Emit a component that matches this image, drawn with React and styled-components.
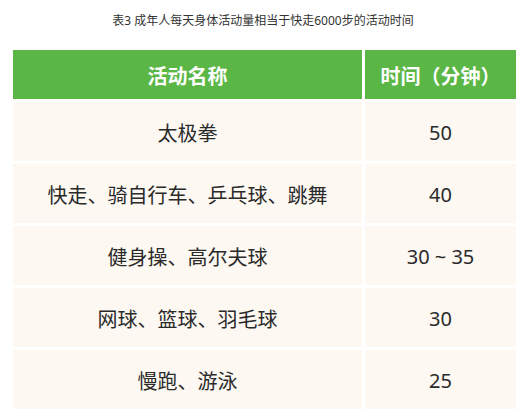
import React from 'react';
import styled, { createGlobalStyle } from 'styled-components';

const GlobalStyle = createGlobalStyle`
    body {
        margin: 0;
        background: #ffffff;
        font-family: "Noto Sans", "Noto Sans CJK SC", sans-serif;
    }
`;

const rows = [
    { name: '太极拳', time: '50' },
    { name: '快走、骑自行车、乒乓球、跳舞', time: '40' },
    { name: '健身操、高尔夫球', time: '30 ~ 35' },
    { name: '网球、篮球、羽毛球', time: '30' },
    { name: '慢跑、游泳', time: '25' },
];

const App = () => {
    return (
        <Page>
            <GlobalStyle />
            <Caption>表3 成年人每天身体活动量相当于快走6000步的活动时间</Caption>
            <Table>
                <HeadCell>活动名称</HeadCell>
                <HeadCell>时间（分钟）</HeadCell>
                {rows.map((r, idx) => (
                    <React.Fragment key={idx}>
                        <Cell>{r.name}</Cell>
                        <Cell>{r.time}</Cell>
                    </React.Fragment>
                ))}
            </Table>
        </Page>
    );
};

const Page = styled.div`
    width: 526px;
    height: 418px;
    overflow: hidden;
`;

const Caption = styled.div`
    height: 50px;
    padding-top: 12px;
    box-sizing: border-box;
    text-align: center;
    font-size: 12px;
    line-height: 18px;
    color: #333333;
`;

const Table = styled.div`
    display: grid;
    grid-template-columns: 349px 151px;
    grid-template-rows: 49px repeat(5, 59px);
    gap: 3px;
    margin-left: 13px;
`;

const HeadCell = styled.div`
    display: flex;
    align-items: center;
    justify-content: center;
    padding-top: 2px;
    background-color: #5ab645;
    color: #ffffff;
    font-weight: 700;
    font-size: 20px;
`;

const Cell = styled.div`
    display: flex;
    align-items: center;
    justify-content: center;
    padding-top: 2px;
    background-color: #fdf8f2;
    color: #2a2a2a;
    font-size: 20px;
`;

export default App;
